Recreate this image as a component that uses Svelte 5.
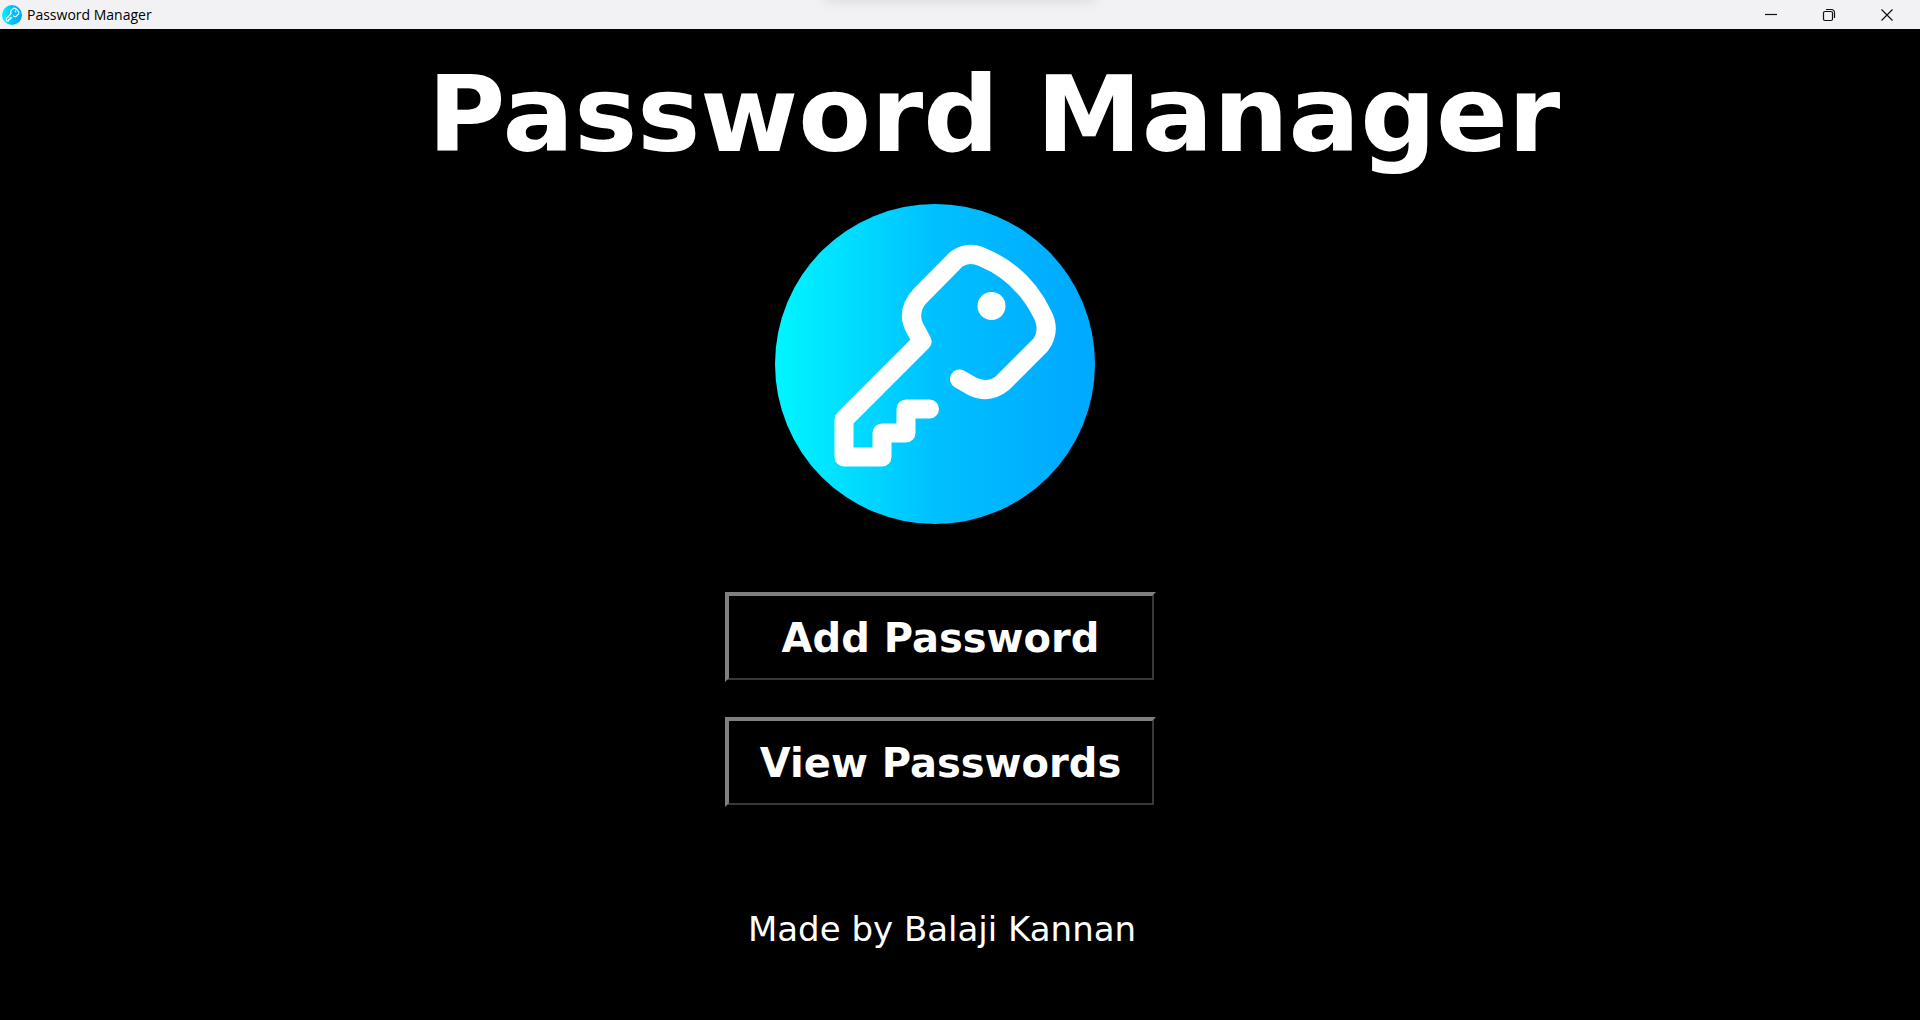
<script>
  const actions = ['Add Password', 'View Passwords'];
</script>

{#snippet keyLogo(id)}
  <svg viewBox="0 0 320 320" aria-hidden="true">
    <defs>
      <linearGradient {id}>
        <stop offset="0" stop-color="#00f6ff" />
        <stop offset="0.04" stop-color="#00f2ff" />
        <stop offset="0.5" stop-color="#00c0ff" />
        <stop offset="0.9" stop-color="#00acff" />
        <stop offset="1" stop-color="#00aaff" />
      </linearGradient>
    </defs>
    <circle cx="160" cy="160" r="160" fill="url(#{id})" />
    <path
      fill="none"
      stroke="#fff"
      stroke-width="19"
      stroke-linecap="round"
      stroke-linejoin="round"
      d="M154.500 205H131V229H107V253H69V215.500L147 137.500L140 124.500Q131 107.500 145 92L181.500 55Q193.500 46.500 208 53.500Q248 70 268 111.500Q275.500 127 265.500 141L227.500 179Q214 190 197.500 182.500L184.500 175"
    />
    <circle cx="216.500" cy="102" r="14" fill="#fff" />
  </svg>
{/snippet}

<div class="window">
  <header class="titlebar">
    <span class="app-icon">{@render keyLogo('icon-fill')}</span>
    <span class="app-name">Password Manager</span>
    <div class="notch"></div>
    <div class="controls">
      <button type="button" aria-label="Minimize">
        <svg viewBox="0 0 14 14"><path d="M1 6.500H13" /></svg>
      </button>
      <button type="button" aria-label="Restore">
        <svg viewBox="0 0 14 14">
          <rect x="1.500" y="3.500" width="9" height="9" rx="1.500" />
          <path d="M4 1.500H9.500a3 3 0 0 1 3 3V10" />
        </svg>
      </button>
      <button type="button" aria-label="Close">
        <svg viewBox="0 0 14 14"><path d="M1.500 1.500L12.500 12.500M12.500 1.500L1.500 12.500" /></svg>
      </button>
    </div>
  </header>

  <main>
    <h1>Password Manager</h1>
    <div class="logo">{@render keyLogo('logo-fill')}</div>
    <div class="actions">
      {#each actions as label}
        <button type="button"><span>{label}</span></button>
      {/each}
    </div>
    <p>Made by Balaji Kannan</p>
  </main>
</div>

<style>
  :global(body) {
    margin: 0;
    background: #000;
  }

  .window {
    min-height: 100vh;
    display: flex;
    flex-direction: column;
    background: #000;
    color: #fff;
    font-family: Verdana, 'DejaVu Sans', sans-serif;
  }

  .titlebar {
    position: relative;
    display: flex;
    align-items: center;
    height: 29px;
    padding-left: 2px;
    overflow: hidden;
    background: #f2f2f4;
    color: #000;
    font: 14px/20px 'Open Sans', 'Noto Sans', sans-serif;
  }

  svg {
    display: block;
    width: 100%;
    height: 100%;
  }

  .app-icon {
    width: 20px;
    height: 20px;
    margin-right: 5px;
  }

  .notch {
    position: absolute;
    top: -10px;
    left: 43%;
    width: 14%;
    height: 8px;
    box-shadow: 0 0 14px 2px rgba(0, 0, 0, 0.13);
  }

  .controls {
    display: flex;
    margin-left: auto;
    padding-right: 4px;
  }

  .controls button {
    display: grid;
    place-items: center;
    width: 58px;
    height: 28px;
    padding: 0;
    border: 0;
    background: none;
  }

  .controls svg {
    width: 14px;
    height: 14px;
    fill: none;
    stroke: #111;
    stroke-width: 1.2;
  }

  main {
    display: flex;
    flex-direction: column;
    align-items: center;
  }

  h1 {
    margin: 21px 0 0;
    padding-left: 68px;
    font-size: 106px;
    line-height: 130px;
    white-space: nowrap;
  }

  .logo {
    width: 320px;
    height: 320px;
    margin: 24px 50px 0 0;
  }

  .actions {
    display: grid;
    gap: 35px;
    width: 431px;
    margin: 68px 39px 0 0;
  }

  .actions button {
    display: flex;
    height: 90px;
    padding: 0;
    border: 2px solid;
    border-color: #808080 #000 #000 #808080;
    background: #000;
    color: #fff;
    font: bold 40px/50px Verdana, 'DejaVu Sans', sans-serif;
  }

  .actions span {
    flex: 1;
    align-self: stretch;
    display: grid;
    place-items: center;
    padding-top: 2px;
    border: 2px solid;
    border-color: #808080 #383838 #383838 #808080;
  }

  p {
    margin: 100px 36px 0 0;
    font-size: 34px;
    line-height: 44px;
  }
</style>
